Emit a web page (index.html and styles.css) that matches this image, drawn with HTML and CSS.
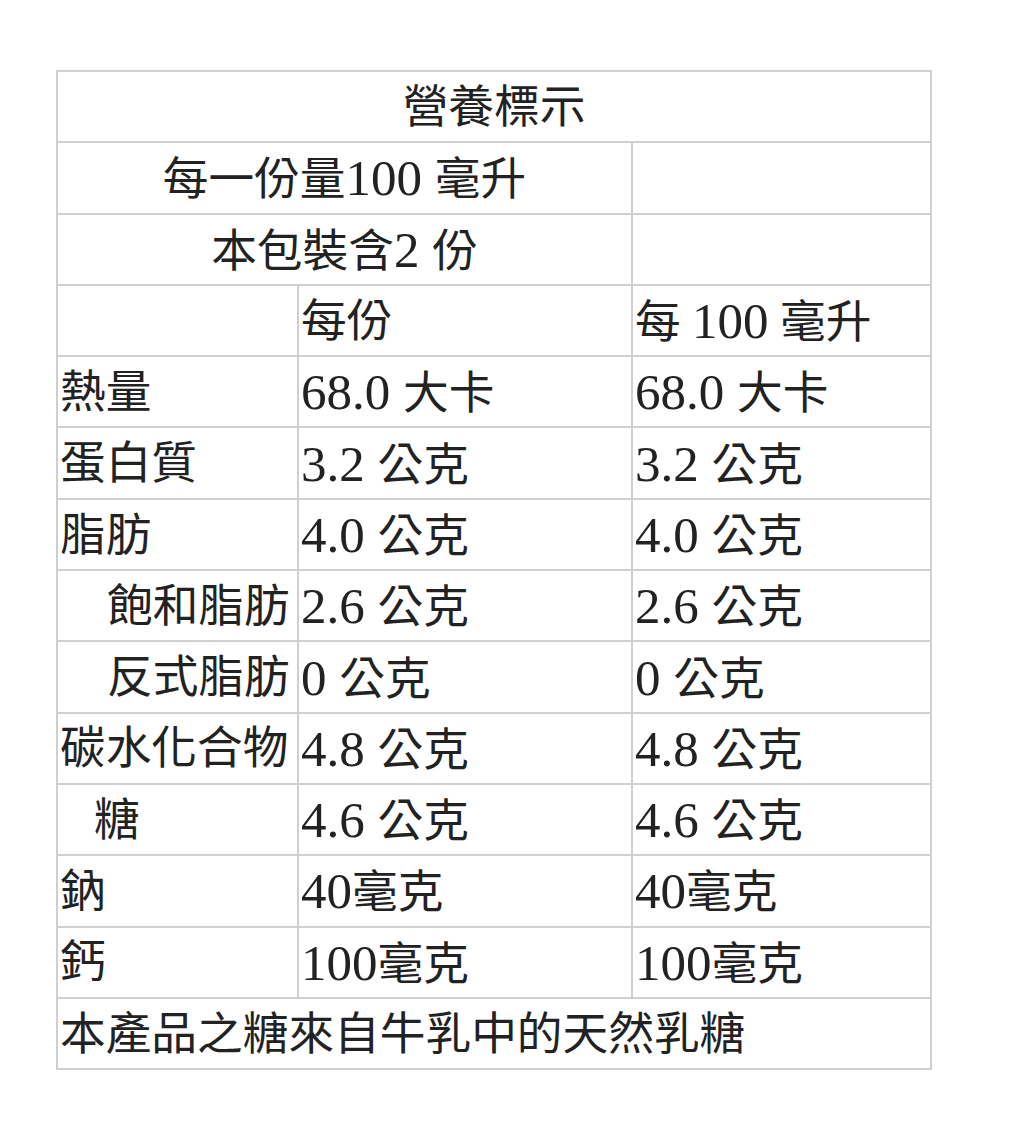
FILE: index.html
```html
<!DOCTYPE html>
<html lang="zh-Hant">
<head>
<meta charset="utf-8">
<title>營養標示</title>
<link rel="stylesheet" href="styles.css">
</head>
<body>
<table class="nutrition">
  <colgroup>
    <col class="c1"><col class="c2"><col class="c3">
  </colgroup>
  <tr><td colspan="3" class="center">營養標示</td></tr>
  <tr><td colspan="2" class="center">每一份量<span class="num">100 </span>毫升</td><td></td></tr>
  <tr><td colspan="2" class="center">本包裝含<span class="num">2 </span>份</td><td></td></tr>
  <tr><td></td><td>每份</td><td>每 <span class="num">100</span> 毫升</td></tr>
  <tr><td>熱量</td><td><span class="num">68.0 </span>大卡</td><td><span class="num">68.0 </span>大卡</td></tr>
  <tr><td>蛋白質</td><td><span class="num">3.2 </span>公克</td><td><span class="num">3.2 </span>公克</td></tr>
  <tr><td>脂肪</td><td><span class="num">4.0 </span>公克</td><td><span class="num">4.0 </span>公克</td></tr>
  <tr><td class="indent">飽和脂肪</td><td><span class="num">2.6 </span>公克</td><td><span class="num">2.6 </span>公克</td></tr>
  <tr><td class="indent">反式脂肪</td><td><span class="num">0 </span>公克</td><td><span class="num">0 </span>公克</td></tr>
  <tr><td>碳水化合物</td><td><span class="num">4.8 </span>公克</td><td><span class="num">4.8 </span>公克</td></tr>
  <tr><td class="indent-sm">糖</td><td><span class="num">4.6 </span>公克</td><td><span class="num">4.6 </span>公克</td></tr>
  <tr><td>鈉</td><td><span class="num">40</span>毫克</td><td><span class="num">40</span>毫克</td></tr>
  <tr><td>鈣</td><td><span class="num">100</span>毫克</td><td><span class="num">100</span>毫克</td></tr>
  <tr><td colspan="3">本產品之糖來自牛乳中的天然乳糖</td></tr>
</table>
</body>
</html>
```
FILE: styles.css
```css
html, body {
  margin: 0;
  padding: 0;
  background: #ffffff;
}
body {
  padding: 70px 0 0 56px;
  font-family: "Liberation Serif", "Noto Sans CJK TC", serif;
  color: #222222;
}
.nutrition {
  border-collapse: collapse;
  table-layout: fixed;
  width: 874px;
  font-size: 45.7px;
  line-height: 1;
}
.c1 { width: 241px; }
.c2 { width: 334px; }
.c3 { width: 299px; }
.nutrition td {
  border: 2px solid #cfcfcf;
  height: 69.3px;
  padding: 2px 0 0 2px;
  white-space: nowrap;
  vertical-align: middle;
  box-sizing: border-box;
}
.nutrition tr {
  height: 71.3px;
}
.num {
  font-size: 51px;
  line-height: 1;
}
.nutrition td.center {
  text-align: center;
  padding-left: 0;
}
.nutrition td.indent {
  padding-left: 49px;
}
.nutrition td.indent-sm {
  padding-left: 36px;
}
```
